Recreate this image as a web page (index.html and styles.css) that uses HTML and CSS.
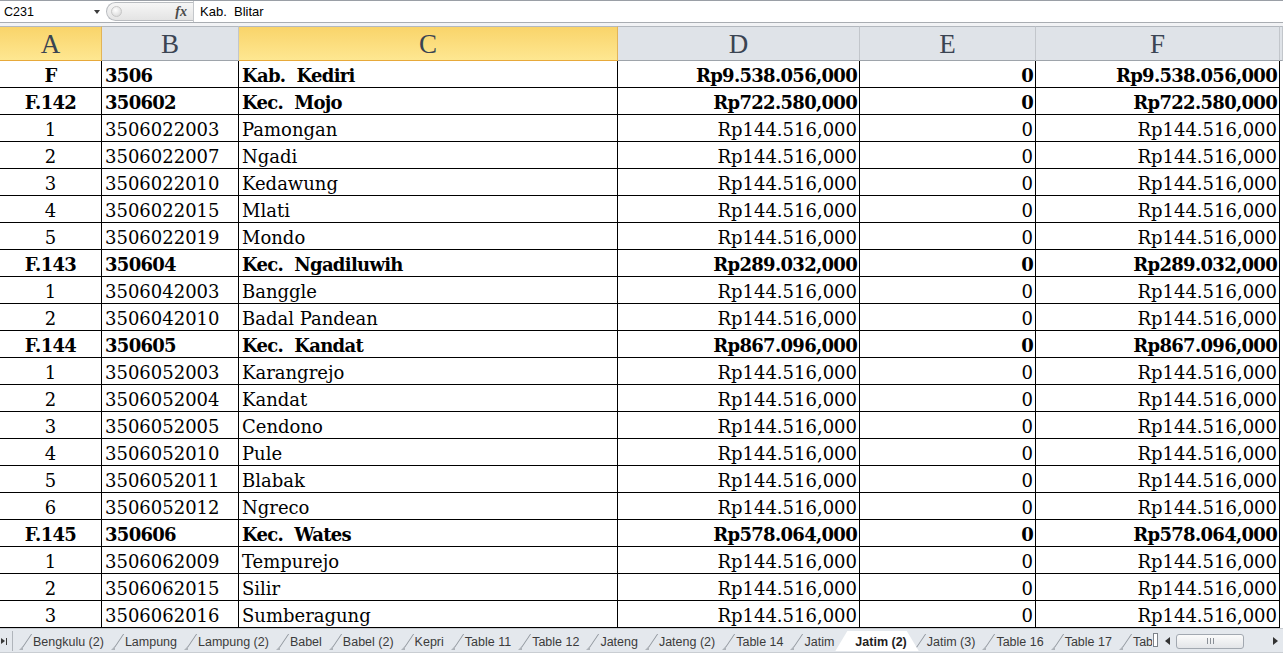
FILE: index.html
```html
<!DOCTYPE html>
<html>
<head>
<meta charset="utf-8">
<link rel="stylesheet" href="styles.css">
</head>
<body>
<div class="app">
  <div class="fbar">
    <div class="namebox"><span class="nb-text">C231</span><span class="dd"></span></div>
    <div class="pill"><span class="knob"></span><span class="fx">fx</span></div>
    <div class="formula">Kab.  Blitar</div>
  </div>
  <div class="gap"></div>
  <div class="sheet">
    <div class="h sel">A</div>
    <div class="h">B</div>
    <div class="h sel">C</div>
    <div class="h">D</div>
    <div class="h">E</div>
    <div class="h">F</div>
    <div class="h last"></div>

    <div class="c ctr b">F</div><div class="c lt b">3506</div><div class="c lt b">Kab.  Kediri</div><div class="c rt b">Rp9.538.056,000</div><div class="c rt b">0</div><div class="c rt b">Rp9.538.056,000</div><div class="c g"></div>
    <div class="c ctr b">F.142</div><div class="c lt b">350602</div><div class="c lt b">Kec.  Mojo</div><div class="c rt b">Rp722.580,000</div><div class="c rt b">0</div><div class="c rt b">Rp722.580,000</div><div class="c g"></div>
    <div class="c ctr">1</div><div class="c lt">3506022003</div><div class="c lt">Pamongan</div><div class="c rt">Rp144.516,000</div><div class="c rt">0</div><div class="c rt">Rp144.516,000</div><div class="c g"></div>
    <div class="c ctr">2</div><div class="c lt">3506022007</div><div class="c lt">Ngadi</div><div class="c rt">Rp144.516,000</div><div class="c rt">0</div><div class="c rt">Rp144.516,000</div><div class="c g"></div>
    <div class="c ctr">3</div><div class="c lt">3506022010</div><div class="c lt">Kedawung</div><div class="c rt">Rp144.516,000</div><div class="c rt">0</div><div class="c rt">Rp144.516,000</div><div class="c g"></div>
    <div class="c ctr">4</div><div class="c lt">3506022015</div><div class="c lt">Mlati</div><div class="c rt">Rp144.516,000</div><div class="c rt">0</div><div class="c rt">Rp144.516,000</div><div class="c g"></div>
    <div class="c ctr">5</div><div class="c lt">3506022019</div><div class="c lt">Mondo</div><div class="c rt">Rp144.516,000</div><div class="c rt">0</div><div class="c rt">Rp144.516,000</div><div class="c g"></div>
    <div class="c ctr b">F.143</div><div class="c lt b">350604</div><div class="c lt b">Kec.  Ngadiluwih</div><div class="c rt b">Rp289.032,000</div><div class="c rt b">0</div><div class="c rt b">Rp289.032,000</div><div class="c g"></div>
    <div class="c ctr">1</div><div class="c lt">3506042003</div><div class="c lt">Banggle</div><div class="c rt">Rp144.516,000</div><div class="c rt">0</div><div class="c rt">Rp144.516,000</div><div class="c g"></div>
    <div class="c ctr">2</div><div class="c lt">3506042010</div><div class="c lt">Badal Pandean</div><div class="c rt">Rp144.516,000</div><div class="c rt">0</div><div class="c rt">Rp144.516,000</div><div class="c g"></div>
    <div class="c ctr b">F.144</div><div class="c lt b">350605</div><div class="c lt b">Kec.  Kandat</div><div class="c rt b">Rp867.096,000</div><div class="c rt b">0</div><div class="c rt b">Rp867.096,000</div><div class="c g"></div>
    <div class="c ctr">1</div><div class="c lt">3506052003</div><div class="c lt">Karangrejo</div><div class="c rt">Rp144.516,000</div><div class="c rt">0</div><div class="c rt">Rp144.516,000</div><div class="c g"></div>
    <div class="c ctr">2</div><div class="c lt">3506052004</div><div class="c lt">Kandat</div><div class="c rt">Rp144.516,000</div><div class="c rt">0</div><div class="c rt">Rp144.516,000</div><div class="c g"></div>
    <div class="c ctr">3</div><div class="c lt">3506052005</div><div class="c lt">Cendono</div><div class="c rt">Rp144.516,000</div><div class="c rt">0</div><div class="c rt">Rp144.516,000</div><div class="c g"></div>
    <div class="c ctr">4</div><div class="c lt">3506052010</div><div class="c lt">Pule</div><div class="c rt">Rp144.516,000</div><div class="c rt">0</div><div class="c rt">Rp144.516,000</div><div class="c g"></div>
    <div class="c ctr">5</div><div class="c lt">3506052011</div><div class="c lt">Blabak</div><div class="c rt">Rp144.516,000</div><div class="c rt">0</div><div class="c rt">Rp144.516,000</div><div class="c g"></div>
    <div class="c ctr">6</div><div class="c lt">3506052012</div><div class="c lt">Ngreco</div><div class="c rt">Rp144.516,000</div><div class="c rt">0</div><div class="c rt">Rp144.516,000</div><div class="c g"></div>
    <div class="c ctr b">F.145</div><div class="c lt b">350606</div><div class="c lt b">Kec.  Wates</div><div class="c rt b">Rp578.064,000</div><div class="c rt b">0</div><div class="c rt b">Rp578.064,000</div><div class="c g"></div>
    <div class="c ctr">1</div><div class="c lt">3506062009</div><div class="c lt">Tempurejo</div><div class="c rt">Rp144.516,000</div><div class="c rt">0</div><div class="c rt">Rp144.516,000</div><div class="c g"></div>
    <div class="c ctr">2</div><div class="c lt">3506062015</div><div class="c lt">Silir</div><div class="c rt">Rp144.516,000</div><div class="c rt">0</div><div class="c rt">Rp144.516,000</div><div class="c g"></div>
    <div class="c ctr">3</div><div class="c lt">3506062016</div><div class="c lt">Sumberagung</div><div class="c rt">Rp144.516,000</div><div class="c rt">0</div><div class="c rt">Rp144.516,000</div><div class="c g"></div>
  </div>
  <div class="tabbar">
    <div class="tabrow">
      <div class="nav"><span class="navarrow"></span><span class="navbar"></span></div>
      <div class="tabs">
        <div class="tab">Bengkulu (2)</div>
        <div class="tab">Lampung</div>
        <div class="tab">Lampung (2)</div>
        <div class="tab">Babel</div>
        <div class="tab">Babel (2)</div>
        <div class="tab">Kepri</div>
        <div class="tab">Table 11</div>
        <div class="tab">Table 12</div>
        <div class="tab">Jateng</div>
        <div class="tab">Jateng (2)</div>
        <div class="tab">Table 14</div>
        <div class="tab">Jatim</div>
        <div class="tab active">Jatim (2)</div>
        <div class="tab">Jatim (3)</div>
        <div class="tab">Table 16</div>
        <div class="tab">Table 17</div>
        <div class="tab">Table 18</div>
      </div>
      <div class="splitter"></div>
      <div class="hscroll">
        <span class="arr left"></span>
        <span class="thumb"><span class="grip"></span></span>
        <span class="arr right"></span>
      </div>
    </div>
    <div class="status"><span class="yel"></span></div>
  </div>
</div>
</body>
</html>
```

FILE: styles.css
```css
html, body {
  margin: 0;
  padding: 0;
  background: #ffffff;
  overflow: hidden;
}
.app {
  width: 1283px;
  height: 653px;
  display: flex;
  flex-direction: column;
  overflow: hidden;
}

/* formula bar */
.fbar {
  height: 23px;
  box-sizing: border-box;
  border-top: 1px solid #9a9fa6;
  border-bottom: 1px solid #a9adb2;
  display: flex;
  background: #ffffff;
  font-family: "Liberation Sans", Arial, sans-serif;
  font-size: 13px;
  color: #000;
}
.namebox {
  width: 106px;
  display: flex;
  align-items: center;
  justify-content: space-between;
  padding: 0 4px 0 4px;
  box-sizing: border-box;
}
.nb-text { font-size: 12.5px; }
.dd {
  width: 0;
  height: 0;
  border-left: 3.5px solid transparent;
  border-right: 3.5px solid transparent;
  border-top: 4px solid #3c3c3c;
  margin-right: 2px;
  margin-top: 1px;
}
.pill {
  width: 87px;
  margin: 1px 0;
  box-sizing: border-box;
  border: 1px solid #b9bcc0;
  border-right: none;
  border-radius: 10px 0 0 10px;
  background: linear-gradient(#f6f6f6, #e4e4e4);
  display: flex;
  align-items: center;
  justify-content: space-between;
  padding: 0 6px 0 4px;
}
.knob {
  width: 9px;
  height: 9px;
  border-radius: 50%;
  background: radial-gradient(circle at 40% 35%, #ffffff, #d2d2d2);
  border: 1px solid #c6c6c6;
}
.fx {
  font-family: "Liberation Serif", serif;
  font-style: italic;
  font-weight: bold;
  font-size: 14px;
  color: #4a4a4a;
}
.formula {
  flex: 1;
  border-left: 1px solid #c4c7cb;
  padding-left: 6px;
  display: flex;
  align-items: center;
  white-space: pre;
}
.gap {
  height: 3px;
  background: #f2f3f5;
}

/* grid */
.sheet {
  display: grid;
  grid-template-columns: 102px 137px 379px 242px 176px 244px 1fr;
  grid-auto-rows: 27px;
  grid-template-rows: 35px;
}
.h {
  box-sizing: border-box;
  border-top: 1px solid #b3b8be;
  border-bottom: 1px solid #9ea4ab;
  border-right: 1px solid #c2c6cb;
  background: #dfe3e8;
  font-family: "Liberation Serif", "Times New Roman", serif;
  font-size: 27px;
  color: #3a4452;
  display: flex;
  align-items: center;
  justify-content: center;
  padding-top: 1px;
}
.h.sel {
  background: linear-gradient(#f9d46a, #fee791);
  border-bottom-color: #e7a93a;
  border-right-color: #e2b458;
}
.c {
  box-sizing: border-box;
  border-right: 1px solid #000;
  border-bottom: 1px solid #000;
  font-family: "DejaVu Serif", serif;
  font-size: 18px;
  line-height: 20px;
  padding-top: 5px;
  color: #000;
  white-space: pre;
  overflow: hidden;
}
.c.ctr { text-align: center; }
.c.lt { padding-left: 3px; }
.c.rt { text-align: right; padding-right: 2px; }
.c.b { font-weight: bold; letter-spacing: -0.7px; }
.c.g { border-right: none; border-bottom: none; }

/* tab bar */
.tabbar {
  flex: 1;
  display: flex;
  flex-direction: column;
  background: #e4e8ed;
  border-top: 1px solid #c7cbd0;
}
.tabrow {
  height: 20px;
  margin-top: 2px;
  display: flex;
  align-items: stretch;
}
.nav {
  width: 13px;
  display: flex;
  align-items: center;
  position: relative;
  overflow: hidden;
  border-right: 1px solid #b0b5bb;
  box-sizing: border-box;
}
.navarrow {
  width: 0;
  height: 0;
  border-top: 3px solid transparent;
  border-bottom: 3px solid transparent;
  border-left: 4px solid #3a3a3a;
  margin-left: 1px;
}
.navbar {
  width: 1px;
  height: 7px;
  background: #3a3a3a;
  margin-left: 1px;
}
.tabs {
  width: 1139px;
  display: flex;
  overflow: hidden;
  padding-left: 8px;
  box-sizing: border-box;
}
.tab {
  position: relative;
  flex: none;
  padding: 2px 9px 0 12px;
  font-family: "Liberation Sans", Arial, sans-serif;
  font-size: 12.5px;
  line-height: 19px;
  color: #3b3b3b;
}
.tab::before {
  content: "";
  position: absolute;
  left: 0;
  bottom: 2px;
  width: 1px;
  height: 15px;
  background: #8e949b;
  transform: skewX(-34deg);
  transform-origin: bottom left;
}
.tab::after {
  content: "";
  position: absolute;
  left: -2px;
  bottom: 1px;
  width: 0;
  height: 0;
  border-left: 4px solid transparent;
  border-bottom: 4px solid #aeb3b9;
}
.tab.active {
  background: #ffffff;
  font-weight: bold;
  color: #1e1e1e;
  margin-left: -8px;
  padding-left: 20px;
  padding-right: 12px;
  margin-right: -4px;
  clip-path: polygon(0 100%, 12px 0, calc(100% - 12px) 0, 100% 100%);
  z-index: 1;
}
.tab.active::before, .tab.active::after { display: none; }
.splitter {
  width: 5px;
  height: 14px;
  margin-top: 2px;
  background: #ffffff;
  border: 1px solid #7d838a;
  box-sizing: border-box;
  margin-left: 1px;
}
.hscroll {
  flex: 1;
  display: flex;
  align-items: center;
  padding: 0 2px 0 7px;
  gap: 4px;
}
.arr {
  width: 0;
  height: 0;
  border-top: 4px solid transparent;
  border-bottom: 4px solid transparent;
}
.arr.left { border-right: 5px solid #333; margin-right: 2px; }
.arr.right { border-left: 5px solid #333; margin-left: auto; margin-right: 3px; }
.thumb {
  width: 68px;
  height: 15px;
  box-sizing: border-box;
  border: 1px solid #a2a8b0;
  border-radius: 3px;
  background: linear-gradient(#fbfbfb, #e3e5e8);
  display: flex;
  align-items: center;
  justify-content: center;
}
.grip {
  width: 7px;
  height: 6px;
  background: repeating-linear-gradient(90deg, #8a8f96 0 1px, transparent 1px 3px);
}
.status {
  flex: 1;
  margin-top: 1px;
  background: #dfe3e8;
  border-top: 1px solid #c9cdd2;
  position: relative;
}
.yel {
  position: absolute;
  left: 1077px;
  top: 1px;
  width: 16px;
  height: 4px;
  background: #f2c43c;
  border: 1px solid #c9952a;
  box-sizing: border-box;
}
```
